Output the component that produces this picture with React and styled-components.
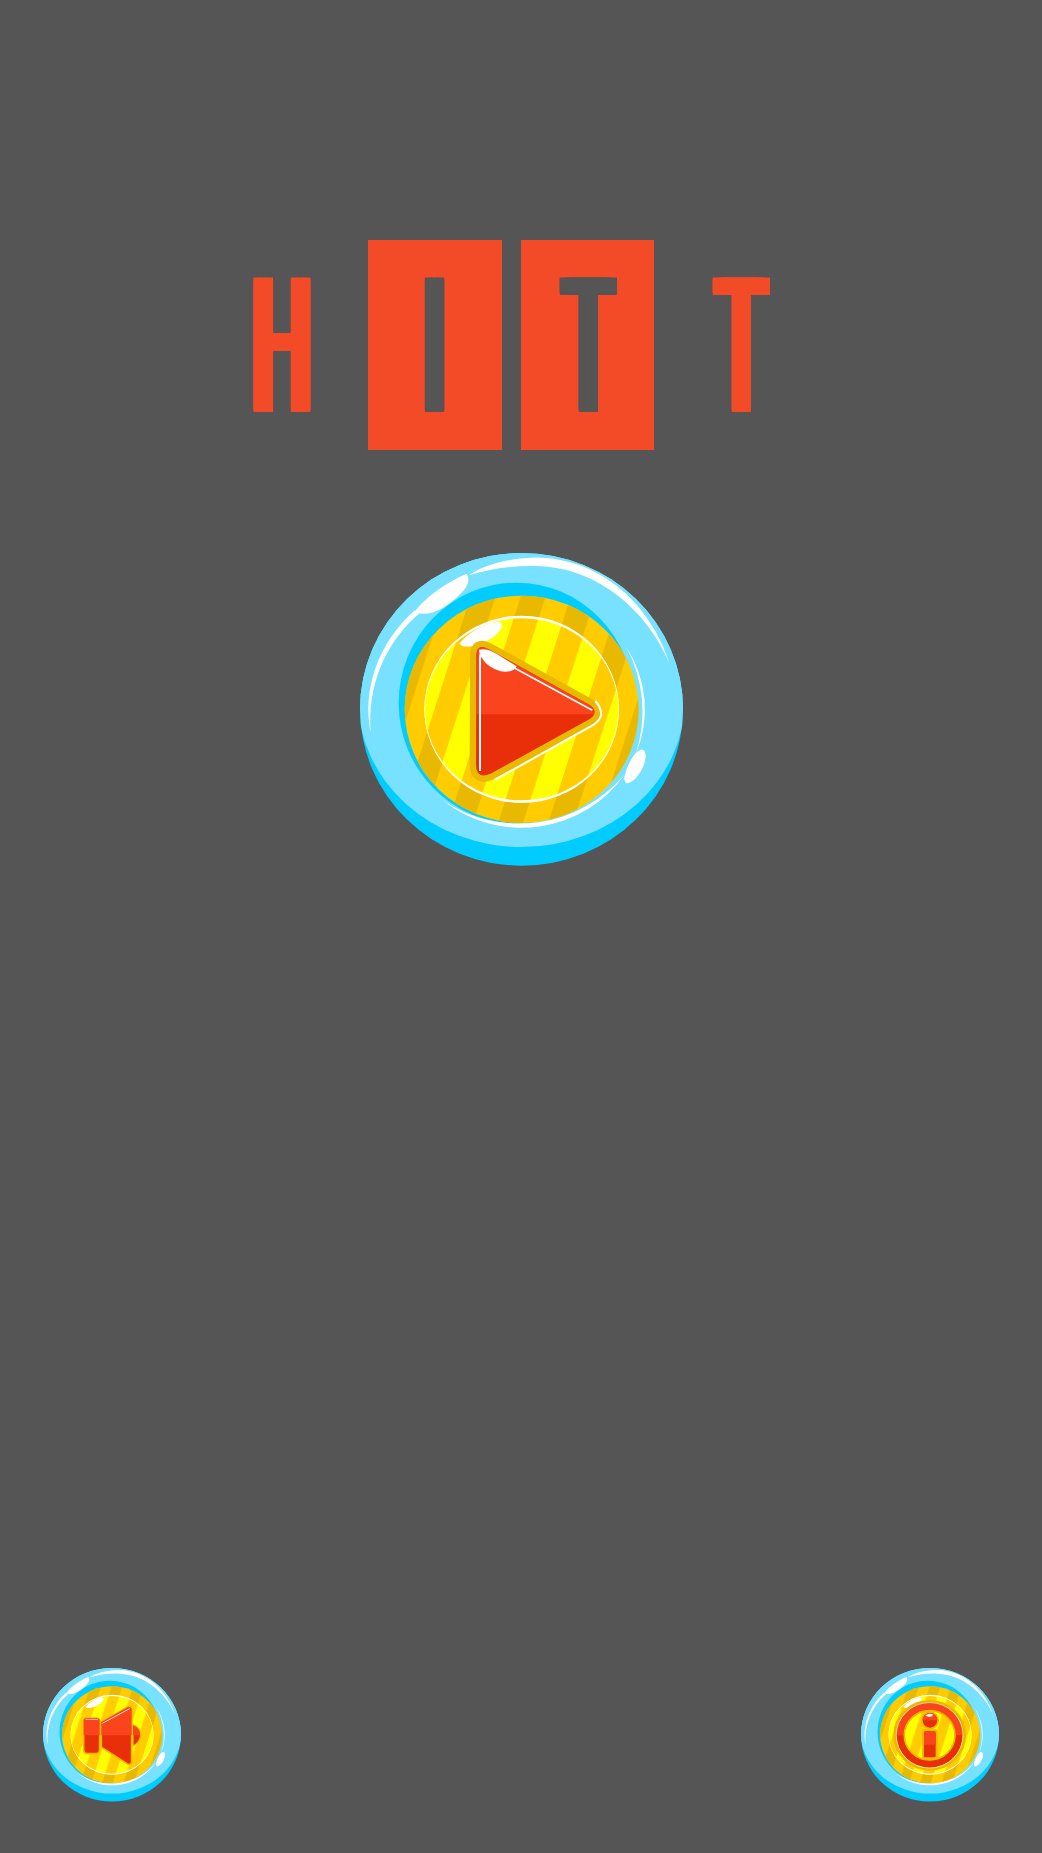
import React, { useId } from "react";
import styled, { createGlobalStyle } from "styled-components";

const Global = createGlobalStyle`
  html, body { margin: 0; padding: 0; background: #555555; }
`;

const Page = styled.main`
  display: flex;
  flex-direction: column;
  align-items: center;
  height: 1853px;
  padding-top: 240px;
  box-sizing: border-box;
  background: #555555;
`;

const Logo = styled.h1`
  display: flex;
  gap: 19px;
  margin: 0 20px 0 0;
  font-weight: 400;
`;

const Tile = styled.span`
  flex: none;
  display: flex;
  align-items: center;
  justify-content: center;
  box-sizing: border-box;
  width: 133.5px;
  height: 210px;
  padding-bottom: 2px;
  background: ${(p) => (p.$filled ? "#f34b28" : "transparent")};
  color: ${(p) => (p.$filled ? "#555555" : "#f34b28")};
  font-family: "Liberation Sans", sans-serif;
  font-size: 191px;
  line-height: 208px;
`;

const Letter = styled.span`
  flex: none;
  display: block;
  transform: translateX(${(p) => p.$dx || 0}px) scaleX(0.42);
  text-shadow:
    14px 0 currentColor, -14px 0 currentColor,
    0 1.5px currentColor, 0 -1.5px currentColor,
    14px 1.5px currentColor, -14px 1.5px currentColor,
    14px -1.5px currentColor, -14px -1.5px currentColor;
`;

const PlayArea = styled.div`
  margin-top: 103px;
`;

const Footer = styled.footer`
  display: flex;
  justify-content: space-between;
  align-self: stretch;
  margin-top: auto;
  padding: 0 43px 51px;
`;

const ButtonRoot = styled.button`
  display: block;
  padding: 0;
  border: 0;
  background: none;
  width: ${(p) => p.$size}px;
  height: ${(p) => p.$size * 0.968}px;
`;

const ButtonArt = styled.svg`
  display: block;
  width: 100%;
  height: 100%;
`;

function PlayGlyph() {
  const tri = "M409 378 Q408 340 442 358 L745 525 Q775 545 745 565 L450 728 Q408 748 408 700 Z";
  return (
    <g>
      <path d={tri} fill="#e8b900" stroke="#e8b900" strokeWidth="42" strokeLinejoin="round" />
      <path d="M462 749 L758 584 Q786 563 781 545 Q778 528 764 512" fill="none" stroke="#fff" strokeWidth="6" />
      <path d={tri} fill="#e92f0a" stroke="#e92f0a" strokeWidth="4" strokeLinejoin="round" />
      <path d="M407 378 Q408 338 442 356 L745 523 Q762 535 760 552 L407 552 Z" fill="#f9441d" />
      <path d="M418 722 L418 385 Q418 356 440 368" fill="none" stroke="#fff" strokeWidth="6" />
      <path d="M520 412 L755 540" fill="none" stroke="#fff" strokeWidth="5" />
      <path d="M415 358 Q440 352 470 372 L528 408 Q520 428 480 423 Q440 410 425 385 Q415 370 415 358 Z" fill="#fff" />
    </g>
  );
}

function SpeakerGlyph() {
  return (
    <g transform="translate(58 68) scale(2.34) translate(-38 -38)">
      <path d="M308 208 Q332 218 331 240 Q330 262 308 272 Z" fill="#e92f0a" stroke="#e8b900" strokeWidth="4" />
      <path d="M308 210 Q330 219 329 240 L308 240 Z" fill="#f9441d" />
      <rect x="160" y="188" width="48" height="107" rx="10" fill="#e92f0a" stroke="#e8b900" strokeWidth="5" />
      <path d="M160 240 L160 198 Q160 188 170 188 L198 188 Q208 188 208 198 L208 240 Z" fill="#f9441d" />
      <path d="M213 200 L292 156 Q304 152 304 165 L304 320 Q302 332 290 325 L213 276 Z" fill="#e92f0a" stroke="#e8b900" strokeWidth="5" strokeLinejoin="round" />
      <path d="M213 200 L292 156 Q304 152 304 165 L304 240 L213 240 Z" fill="#f9441d" />
      <path d="M216 204 L298 160" stroke="#fff" strokeWidth="2.5" fill="none" />
      <path d="M165 192 L203 192" stroke="#fff" strokeWidth="2" fill="none" />
    </g>
  );
}

function InfoGlyph() {
  return (
    <g transform="translate(58 68) scale(2.34) translate(-33 -38)">
      <ellipse cx="239" cy="240" rx="105" ry="102" fill="none" stroke="#e8b900" strokeWidth="8" />
      <ellipse cx="239" cy="240" rx="88" ry="86" fill="none" stroke="#e92f0a" strokeWidth="22" />
      <path d="M151 240 A88 86 0 0 1 327 240" fill="none" stroke="#f9441d" strokeWidth="22" />
      <ellipse cx="239" cy="240" rx="100" ry="98" fill="none" stroke="#fff" strokeWidth="1.5" />
      <ellipse cx="239" cy="240" rx="76" ry="74" fill="none" stroke="#e8b900" strokeWidth="5" />
      <circle cx="240" cy="195" r="27" fill="#e8b900" />
      <circle cx="240" cy="195" r="22" fill="#e92f0a" />
      <path d="M218 195 A22 22 0 0 1 262 195 Z" fill="#f9441d" />
      <rect x="216" y="222" width="47" height="88" rx="8" fill="#e8b900" />
      <rect x="222" y="228" width="35" height="78" rx="5" fill="#e92f0a" />
      <path d="M222 268 L222 233 Q222 228 227 228 L252 228 Q257 228 257 233 L257 268 Z" fill="#f9441d" />
      <path d="M226 180 Q238 172 250 178 Q240 190 226 180 Z" fill="#fff" />
    </g>
  );
}

function GlassButton({ size, label, children }) {
  const id = useId().replace(/[^a-zA-Z0-9]/g, "");
  return (
    <ButtonRoot $size={size} aria-label={label}>
      <ButtonArt viewBox="58 68 969 938">
        <defs>
          <pattern id={`${id}s`} width="143" height="143" patternUnits="userSpaceOnUse" patternTransform="rotate(17.8)">
            <rect x="3" y="0" width="71" height="143" fill="#e8b900" />
          </pattern>
          <pattern id={`${id}y`} width="143" height="143" patternUnits="userSpaceOnUse" patternTransform="rotate(17.8)">
            <rect x="3" y="0" width="71" height="143" fill="#ffcc00" />
          </pattern>
          <clipPath id={`${id}c`}>
            <ellipse cx="542.5" cy="537" rx="484.5" ry="469" />
          </clipPath>
        </defs>
        <ellipse cx="542.5" cy="537" rx="484.5" ry="469" fill="#00ccff" />
        <ellipse cx="542.5" cy="509" rx="490" ry="441" fill="#77e1ff" clipPath={`url(#${id}c)`} />
        <path d="M58 537 A484.5 469 0 0 1 1027 537 Z" fill="#77e1ff" />
        <ellipse cx="527" cy="518" rx="353" ry="361" fill="#00ccff" />
        <ellipse cx="543" cy="537" rx="351" ry="341" fill="#ffcc00" />
        <ellipse cx="543" cy="537" rx="351" ry="341" fill={`url(#${id}s)`} />
        <ellipse cx="543" cy="537" rx="292" ry="278" fill="#ffff00" />
        <ellipse cx="543" cy="537" rx="292" ry="278" fill={`url(#${id}y)`} />
        <path
          fillRule="evenodd"
          fill="#fff"
          d="M251 537 A292 281 0 0 1 835 537 A292 281 0 0 1 251 537 Z M253 537 A290 273 0 0 0 833 537 A290 273 0 0 0 253 537 Z"
        />
        <path d="M385 135 C440 95 540 80 600 82 C780 88 930 220 987 400 C920 240 770 115 600 108 C520 104 450 115 385 135 Z" fill="#fff" />
        <path d="M90 605 C65 480 110 340 222 240 L235 250 C130 340 80 470 90 605 Z" fill="#fff" />
        <path d="M225 240 C265 190 330 150 378 130 C390 150 380 170 360 190 C320 230 280 252 245 250 C230 250 222 248 225 240 Z" fill="#fff" />
        <path d="M855 347 A370 355 0 0 1 885 672 A410 410 0 0 0 855 347 Z" fill="#fff" />
        <path d="M305 809 A370 355 0 0 0 852 732 A412 412 0 0 1 305 809 Z" fill="#fff" />
        <path d="M850 745 C858 705 880 665 900 658 C918 655 918 685 908 708 C892 745 865 765 855 757 Z" fill="#fff" />
        <path d="M356 340 C385 305 435 275 478 275 C492 285 480 305 450 325 C420 345 385 352 365 347 Z" fill="#fff" />
        {children}
      </ButtonArt>
    </ButtonRoot>
  );
}

export default function App() {
  return (
    <Page>
      <Global />
      <Logo>
        <Tile><Letter>H</Letter></Tile>
        <Tile $filled><Letter>I</Letter></Tile>
        <Tile $filled><Letter $dx={1}>T</Letter></Tile>
        <Tile><Letter $dx={2}>T</Letter></Tile>
      </Logo>
      <PlayArea>
        <GlassButton size={323} label="Play"><PlayGlyph /></GlassButton>
      </PlayArea>
      <Footer>
        <GlassButton size={138} label="Sound"><SpeakerGlyph /></GlassButton>
        <GlassButton size={138} label="Info"><InfoGlyph /></GlassButton>
      </Footer>
    </Page>
  );
}
